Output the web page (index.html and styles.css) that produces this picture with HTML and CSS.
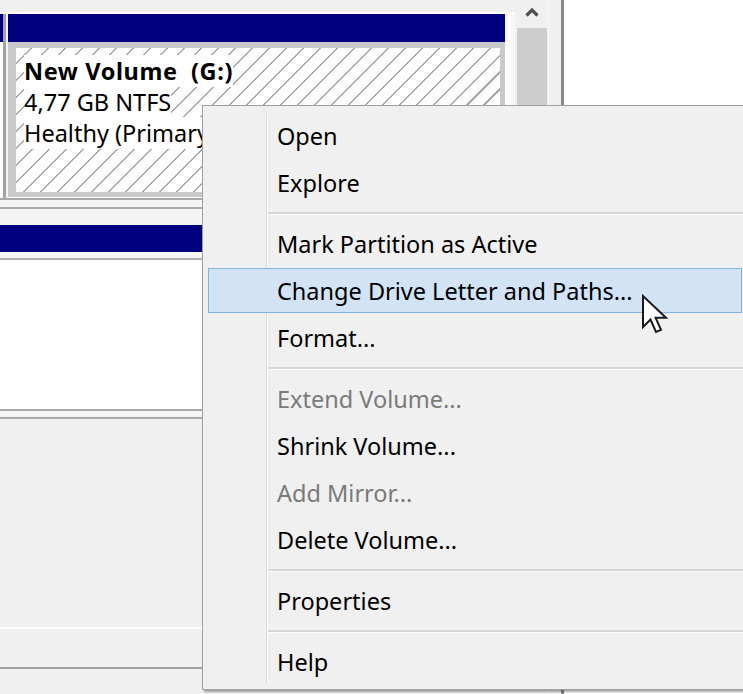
FILE: index.html
```html
<!DOCTYPE html>
<html>
<head>
<meta charset="utf-8">
<link rel="stylesheet" href="styles.css">
</head>
<body>
<div class="screen">
  <div class="diskpane">
    <div class="topstrip"></div>
    <div class="disk1">
      <div class="dlabel"><div class="navy"></div><div class="dlabel-body"></div></div>
      <div class="dline"></div>
      <div class="dspace"></div>
      <div class="partition">
        <div class="navy"></div>
        <div class="pbody">
          <div class="hatch">
            <div class="pline"><span class="ptext bold">New Volume  (G:)</span></div>
            <div class="pline"><span class="ptext">4,77 GB NTFS</span></div>
            <div class="pline"><span class="ptext">Healthy (Primary Partition)</span></div>
          </div>
        </div>
      </div>
      <div class="pright"></div>
    </div>
    <div class="rowgap"></div>
    <div class="disk2">
      <div class="navy2"></div>
      <div class="d2body"></div>
    </div>
    <div class="lowerpane">
      <div class="lower-fill"></div>
      <div class="lower-foot"></div>
    </div>
  </div>
  <div class="scrollbar">
    <div class="sb-up">
      <svg width="14" height="9" viewBox="0 0 14 9"><path d="M1.5 7.5 L7 2 L12.5 7.5" fill="none" stroke="#505050" stroke-width="3.2"/></svg>
    </div>
    <div class="sb-thumb"></div>
  </div>
  <div class="sb-gap"></div>
  <div class="splitter"></div>
  <div class="rightpane"></div>
</div>

<div class="menu">
  <div class="item">Open</div>
  <div class="item">Explore</div>
  <div class="sep"></div>
  <div class="item">Mark Partition as Active</div>
  <div class="item hover">Change Drive Letter and Paths...</div>
  <div class="item">Format...</div>
  <div class="sep"></div>
  <div class="item disabled">Extend Volume...</div>
  <div class="item">Shrink Volume...</div>
  <div class="item disabled">Add Mirror...</div>
  <div class="item">Delete Volume...</div>
  <div class="sep"></div>
  <div class="item">Properties</div>
  <div class="sep"></div>
  <div class="item">Help</div>
</div>

<svg class="cursor" width="30" height="44" viewBox="0 0 30 44">
  <path d="M2 2 L2 33 L9.5 25.5 L15 38 L20 35.8 L14.6 23.8 L25 23.8 Z" fill="#fff" stroke="#1a1a1a" stroke-width="2" stroke-linejoin="miter"/>
</svg>
</body>
</html>
```

FILE: styles.css
```css
html, body {
  margin: 0;
  padding: 0;
}
body {
  width: 743px;
  height: 694px;
  overflow: hidden;
  position: relative;
  background: #f0f0f0;
  font-family: "Noto Sans", "Open Sans", sans-serif;
  font-size: 23.5px;
  color: #000;
}
.screen {
  display: flex;
  width: 743px;
  height: 694px;
  overflow: hidden;
  background: #f0f0f0;
}
.diskpane {
  width: 515px;
  flex: none;
  display: flex;
  flex-direction: column;
}
.topstrip {
  height: 12px;
  background: #f0f0f0;
  border-bottom: 2px solid #fbfbfb;
}
.disk1 {
  height: 184px;
  display: flex;
  border-bottom: 2px solid #a9a9a9;
  background: #fff;
}
.dlabel {
  width: 3px;
  display: flex;
  flex-direction: column;
}
.navy {
  height: 28px;
  background: #000080;
  flex: none;
}
.dlabel-body {
  flex: 1;
  background: #fff;
}
.dline {
  width: 3px;
  background: #a3a3a3;
}
.dspace {
  width: 2px;
  background: #f4f4f4;
}
.partition {
  width: 497px;
  display: flex;
  flex-direction: column;
}
.pbody {
  flex: 1;
  background: #c9c9c9;
  padding: 6px 5px 5px 8px;
  margin-bottom: 1px;
  display: flex;
}
.hatch {
  flex: 1;
  background-color: #fff;
  background-image: repeating-linear-gradient(135deg, #fff 0px, #fff 10.5px, #a8a8a8 10.5px, #a8a8a8 12px);
  padding: 8px 0 0 8px;
  overflow: hidden;
}
.pline {
  height: 31px;
  line-height: 31px;
  white-space: pre;
}
.ptext {
  background: #fff;
}
.bold {
  font-weight: bold;
  letter-spacing: 0.6px;
}
.pright {
  flex: 1;
  background: #f6f6f6;
  border-left: 6px solid #fbfbfb;
}
.rowgap {
  height: 25px;
  background: #f4f4f4;
  box-sizing: border-box;
  padding-top: 7px;
}
.rowgap::before {
  content: "";
  display: block;
  height: 2px;
  background: #aaaaaa;
}
.disk2 {
  height: 184px;
  display: flex;
  flex-direction: column;
  border-bottom: 2px solid #a9a9a9;
}
.navy2 {
  height: 27px;
  background: #000080;
  border-bottom: 6px solid #f6f6f6;
}
.d2body {
  flex: 1;
  background: #fff;
  border-top: 2px solid #b0b0b0;
}
.lowerpane {
  flex: 1;
  display: flex;
  flex-direction: column;
  border-top: 6px solid #f4f4f4;
}
.lower-fill {
  height: 208px;
  background: #f0f0f0;
  border-top: 2px solid #a9a9a9;
  border-bottom: 2px solid #fcfcfc;
}
.lower-foot {
  height: 38px;
  background: #f0f0f0;
  border-bottom: 2px solid #a0a0a0;
}
.scrollbar {
  width: 33px;
  flex: none;
  background: #f0f0f0;
  display: flex;
  flex-direction: column;
  align-items: center;
}
.sb-up {
  height: 28px;
  width: 100%;
  display: flex;
  justify-content: center;
  align-items: flex-start;
  padding-top: 8px;
  box-sizing: border-box;
}
.sb-thumb {
  width: 30px;
  height: 140px;
  background: #cdcdcd;
}
.sb-gap {
  width: 13px;
  flex: none;
  background: #f0f0f0;
  border-left: 1px solid #f8f8f8;
  box-sizing: border-box;
}
.splitter {
  width: 3px;
  flex: none;
  background: #8a8a8a;
}
.rightpane {
  flex: 1;
  background: #fff;
}

/* context menu */
.menu {
  position: absolute;
  left: 202px;
  top: 105px;
  width: 542px;
  padding: 6px 0 4px;
  border: 1px solid #a0a0a0;
  background: #f0f0f0;
  box-shadow: 2px 2px 2px rgba(0, 0, 0, 0.35);
}
.menu::before {
  content: "";
  position: absolute;
  left: 63px;
  top: 7px;
  bottom: 4px;
  width: 1px;
  background: #dadada;
  border-right: 1px solid #fbfbfb;
}
.item {
  height: 47px;
  display: flex;
  align-items: center;
  margin: 0 3px 0 5px;
  padding-left: 69px;
  white-space: nowrap;
  position: relative;
  box-sizing: border-box;
}
.item.hover {
  height: 45px;
  margin-top: 1px;
  margin-bottom: 1px;
  padding-left: 68px;
  background: #d2e3f6;
  border: 1px solid #80b3e9;
}
.item.disabled {
  color: #7a7a7a;
}
.sep {
  height: 14px;
  margin-left: 65px;
  display: flex;
  align-items: center;
  position: relative;
}
.sep::after {
  content: "";
  display: block;
  width: 100%;
  height: 2px;
  background: #d6d6d6;
  border-bottom: 1px solid #fbfbfb;
}
.cursor {
  position: absolute;
  left: 641px;
  top: 294px;
}
```
